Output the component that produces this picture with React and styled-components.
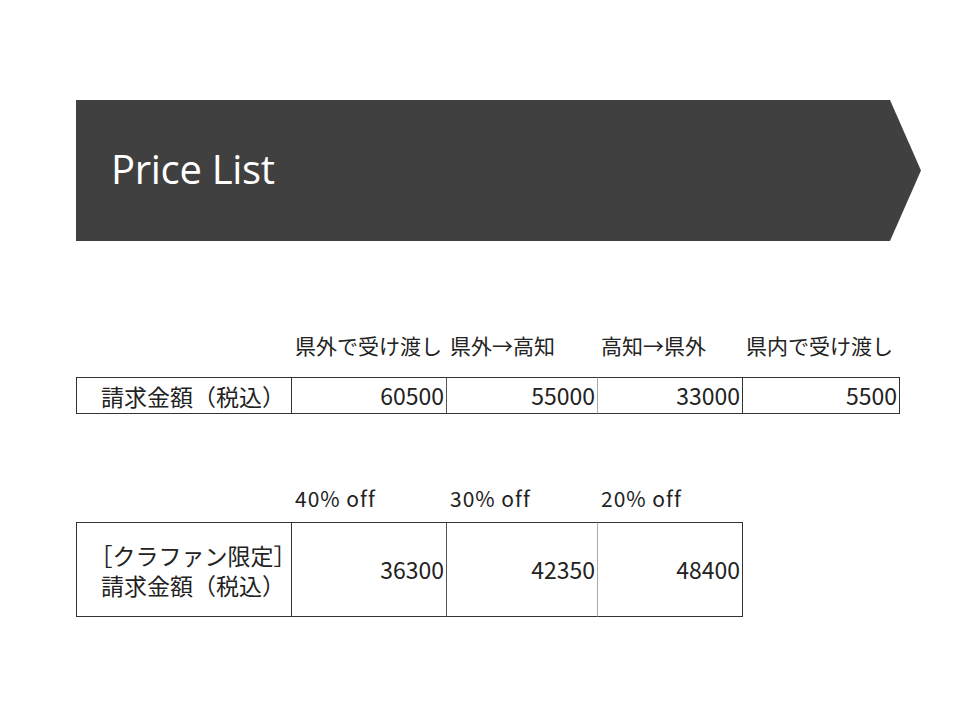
import React from 'react'
import styled, { createGlobalStyle } from 'styled-components'

const GlobalStyle = createGlobalStyle`
  html, body {
    margin: 0;
    padding: 0;
    background: #ffffff;
  }
  body {
    font-family: "Noto Sans CJK JP", "Noto Sans", sans-serif;
    color: #222222;
  }
`

const Slide = styled.div`
  width: 960px;
  height: 720px;
  padding-top: 100px;
  box-sizing: border-box;
`

const Banner = styled.div`
  margin-left: 76px;
  width: 845px;
  height: 141px;
  background: #404040;
  clip-path: polygon(0 0, 814px 0, 100% 50%, 814px 100%, 0 100%);
  display: flex;
  align-items: center;
  padding-left: 35px;
  padding-bottom: 4px;
  box-sizing: border-box;
`

const Title = styled.h1`
  margin: 0;
  font-family: "Open Sans", "Noto Sans", sans-serif;
  font-weight: 400;
  font-size: 40px;
  color: #ffffff;
  letter-spacing: -0.3px;
`

const Section = styled.div`
  margin-left: 76px;
  margin-top: ${(p) => p.$top}px;
  display: grid;
  grid-template-columns: ${(p) => p.$cols};
`

const Heading = styled.div`
  font-size: 21px;
  line-height: 24px;
  padding-left: 3px;
  white-space: nowrap;
  letter-spacing: ${(p) => p.$spacing || 0}px;
  margin-bottom: ${(p) => p.$gap}px;
`

const Cell = styled.div`
  height: ${(p) => p.$height}px;
  border-top: 1.5px solid #333333;
  border-bottom: 1.5px solid #333333;
  border-right: 1px solid ${(p) => p.$line || '#333333'};
  box-sizing: border-box;
  display: flex;
  align-items: center;
  justify-content: flex-end;
  font-size: 23px;
  line-height: 29px;
  padding-right: 2px;
`

const LabelCell = styled(Cell)`
  border-left: 1.5px solid #333333;
  justify-content: center;
  align-items: center;
  text-align: center;
  padding-right: 0;
  padding-left: 18px;
  flex-direction: column;
  white-space: nowrap;
  line-height: 30px;
`

const rows1 = [
  { head: '県外で受け渡し', value: '60500', line: '#555555' },
  { head: '県外→高知', value: '55000', line: '#aaaaaa' },
  { head: '高知→県外', value: '33000', line: '#333333' },
  { head: '県内で受け渡し', value: '5500', line: '#333333' },
]

const rows2 = [
  { head: '40% off', value: '36300', line: '#555555' },
  { head: '30% off', value: '42350', line: '#aaaaaa' },
  { head: '20% off', value: '48400', line: '#333333' },
]

const App = () => {
  return (
    <Slide>
      <GlobalStyle />
      <Banner>
        <Title>Price List</Title>
      </Banner>

      <Section $top={92} $cols="216px 155px 151px 145px 157px">
        <div />
        {rows1.map((r) => (
          <Heading key={r.head} $gap={20}>{r.head}</Heading>
        ))}
        <LabelCell $height={37}>請求金額（税込）</LabelCell>
        {rows1.map((r) => (
          <Cell key={r.value} $height={37} $line={r.line}>{r.value}</Cell>
        ))}
      </Section>

      <Section $top={72} $cols="216px 155px 151px 145px">
        <div />
        {rows2.map((r) => (
          <Heading key={r.head} $gap={12} $spacing={1}>{r.head}</Heading>
        ))}
        <LabelCell $height={95}>
          <span>［クラファン限定］</span>
          <span>請求金額（税込）</span>
        </LabelCell>
        {rows2.map((r) => (
          <Cell key={r.value} $height={95} $line={r.line}>{r.value}</Cell>
        ))}
      </Section>
    </Slide>
  )
}

export default App
